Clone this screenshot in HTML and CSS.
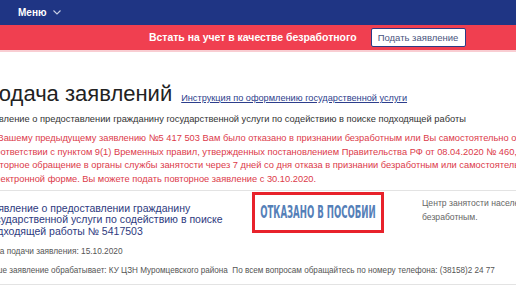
FILE: index.html
```html
<!DOCTYPE html>
<html lang="ru">
<head>
  <meta charset="UTF-8" />
  <meta name="viewport" content="width=device-width, initial-scale=1.0" />
  <title>Подача заявлений</title>
  <link rel="stylesheet" href="styles.css">
</head>
<body>
  <header class="topnav">
    <div class="menu">Меню
      <svg width="8" height="5" viewBox="0 0 8 5"><path d="M0.5 0.5 L4 4 L7.5 0.5" fill="none" stroke="#c9cfe4" stroke-width="1.1"/></svg>
    </div>
  </header>
  <div class="banner">
    <span class="banner-text">Встать на учет в качестве безработного</span>
    <button class="banner-btn">Подать заявление</button>
  </div>

  <main class="page">
    <div class="title-row">
      <h1>Подача заявлений</h1>
      <a href="#" class="guide-link">Инструкция по оформлению государственной услуги</a>
    </div>
    <p class="subtitle">Заявление о предоставлении гражданину государственной услуги по содействию в поиске подходящей работы</p>
    <p class="notice">По Вашему предыдущему заявлению №5 417 503 Вам было отказано в признании безработным или Вы самостоятельно отказались от услуги<br>в соответствии с пунктом 9(1) Временных правил, утвержденных постановлением Правительства РФ от 08.04.2020 № 460, повторное<br>Повторное обращение в органы службы занятости через 7 дней со дня отказа в признании безработным или самостоятельного отказа<br>в электронной форме. Вы можете подать повторное заявление с 30.10.2020.</p>

    <div class="app-card">
      <div class="app-row">
        <div class="app-title">Заявление о предоставлении гражданину<br>государственной услуги по содействию в поиске<br>подходящей работы № 5417503</div>
        <div class="stamp"><span>ОТКАЗАНО В ПОСОБИИ</span></div>
        <div class="app-note">Центр занятости населения отказал в признании<br>безработным.</div>
      </div>
      <div class="app-date">Дата подачи заявления: 15.10.2020</div>
      <div class="app-info">Ваше заявление обрабатывает: КУ ЦЗН Муромцевского района &nbsp;По всем вопросам обращайтесь по номеру телефона: (38158)2 24 77</div>
    </div>
  </main>
</body>
</html>
```

FILE: styles.css
```css
body {
  font-family: "Liberation Sans", Arial, sans-serif;
  margin: 0;
  padding: 0;
  background: #fff;
  overflow: hidden;
}
.topnav {
  background-color: #1f3584;
  height: 25px;
  display: flex;
  align-items: center;
  padding-left: 18px;
}
.menu {
  color: #fff;
  font-size: 10px;
  font-weight: bold;
  display: flex;
  align-items: center;
  gap: 7px;
}
.banner {
  background-color: #f03f50;
  height: 25px;
  border-bottom: 2px solid #f9cdd2;
  display: flex;
  align-items: center;
  padding-left: 149px;
  gap: 14px;
}
.banner-text {
  color: #fff;
  font-weight: bold;
  font-size: 10.45px;
}
.banner-btn {
  font-family: inherit;
  background: #fff;
  color: #4a5580;
  font-size: 9.5px;
  border: 1px solid #2b3b86;
  border-radius: 2px;
  width: 95px;
  height: 19px;
  padding: 0;
}
.page {
  margin-left: -17px;
  width: 760px;
}
.title-row {
  display: flex;
  align-items: baseline;
  gap: 9px;
  margin-top: 29px;
}
h1 {
  font-weight: normal;
  font-size: 22px;
  line-height: 26px;
  color: #222;
  margin: 0;
}
.guide-link {
  font-size: 9.2px;
  color: #2d3e8c;
}
.subtitle {
  font-size: 9.3px;
  line-height: 14px;
  color: #333;
  margin: 5px 0 6px;
}
.notice {
  font-size: 9.3px;
  line-height: 13.5px;
  color: #dc3a4a;
  white-space: nowrap;
  margin: 0 0 4px;
}
.app-card {
  border-top: 1px solid #e3e3e3;
  border-bottom: 1px solid #e3e3e3;
  padding: 1px 3px 6px;
}
.app-row {
  display: grid;
  grid-template-columns: 246px 132px 1fr;
  column-gap: 20px;
  align-items: start;
}
.app-title {
  font-size: 10.5px;
  line-height: 11.3px;
  color: #2e3a80;
  padding-top: 11px;
  white-space: nowrap;
}
.stamp {
  box-sizing: border-box;
  height: 41px;
  padding-bottom: 3px;
  border: 3px solid #e8222b;
  display: flex;
  align-items: center;
  justify-content: center;
}
.stamp span {
  font-family: "DejaVu Sans Condensed", "DejaVu Sans", sans-serif;
  font-weight: bold;
  font-size: 18px;
  color: #5580b8;
  white-space: nowrap;
  transform: scaleX(0.53);
}
.app-note {
  font-size: 8.6px;
  line-height: 14px;
  color: #666;
  padding: 4px 0 0 18px;
  white-space: nowrap;
}
.app-date, .app-info {
  font-size: 8.3px;
  line-height: 14px;
  color: #555;
  white-space: nowrap;
}
.app-date {
  margin-top: 7px;
}
.app-info {
  font-size: 8.15px;
  margin-top: 6px;
}
```
